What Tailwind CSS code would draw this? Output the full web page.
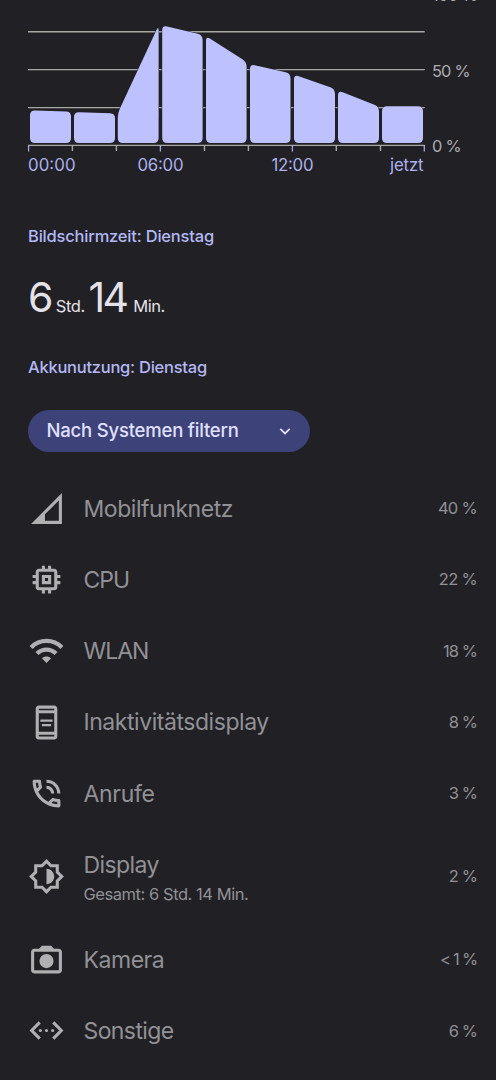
<!DOCTYPE html>
<html lang="de">
<head>
<meta charset="utf-8">
<title>Akkunutzung</title>
<script src="https://cdn.jsdelivr.net/npm/@tailwindcss/browser@4"></script>
</head>
<body class="bg-[#202025] w-[496px] h-[1080px] overflow-hidden font-['Inter','Noto_Sans',sans-serif]">
<main class="flex flex-col">
  <svg class="block w-[496px] h-[190px]" viewBox="0 0 496 190">
    <g stroke="#a9a8a6" stroke-width="1.4">
      <path d="M28 31.7H424.7M28 69.6H424.7M28 107.6H424.7M28 145.4H424.7"/>
      <path d="M72.4 145V151M116.4 145V151M204.5 145V151M248.4 145V151M336.3 145V151M380.5 145V151"/>
    </g>
    <path d="M28.6 145V151.5M160.4 145V151.5M292.4 145V151.5M424.3 145V151.5" stroke="#a5a9e0" stroke-width="1.3"/>
    <g id="bars" fill="#bdc2ff" stroke="#202025" stroke-width="1" paint-order="stroke"></g>
    <g fill="#adb1ec" font-size="16.8">
      <text x="28" y="171.2" textLength="47.5">00:00</text>
      <text x="137.5" y="171.2" textLength="46">06:00</text>
      <text x="271.5" y="171.2" textLength="42">12:00</text>
      <text x="390" y="171.2" textLength="33.5">jetzt</text>
    </g>
    <g fill="#acabb0" font-size="16.4">
      <text x="432" y="0.8" textLength="46">100 %</text>
      <text x="432" y="76.5" textLength="38.5">50 %</text>
      <text x="432" y="152.4" textLength="29.5">0 %</text>
    </g>
  </svg>

  <section class="px-7">
    <h2 class="mt-[34px] h-6 leading-6 text-[16.5px] font-medium tracking-[-0.2px] text-[#b4b8f5]">Bildschirmzeit: Dienstag</h2>
    <p class="mt-[20px] h-[58px] flex items-baseline text-[#e4e2e8] leading-[58px] whitespace-pre"><span class="w-[23.5px] text-[41px] tracking-[-2px]">6</span><span class="w-[37px] text-[16.5px] tracking-[-0.4px]"> Std. </span><span class="w-[40.5px] text-[41px] tracking-[-2.8px]">14</span><span class="text-[16.5px] tracking-[-0.45px]"> Min.</span></p>
    <h2 class="mt-[29px] h-6 leading-6 text-[16.5px] font-medium tracking-[-0.25px] text-[#b4b8f5]">Akkunutzung: Dienstag</h2>
    <button class="mt-[30.5px] flex items-center justify-between w-[281.5px] h-[42px] rounded-full bg-[#3d4279] pl-[18.5px] pr-[18.5px] text-[#e0e0ff]">
      <span class="text-[18.5px] font-medium tracking-[-0.2px] pt-px">Nach Systemen filtern</span>
      <svg class="w-3 h-3" viewBox="0 0 12 12" fill="none" stroke="currentColor" stroke-width="1.8"><path d="M1.3 3.8 6 8.4l4.7-4.6"/></svg>
    </button>
  </section>

  <ul class="mt-[21.3px] pl-7 pr-[19px] text-[#929196] text-[23px] tracking-[-0.45px]">
    <li class="flex items-center h-[71.25px]">
      <svg class="w-[37px] h-[37px] mr-[18.5px] shrink-0" viewBox="0 0 24 24" fill="#b0b0b3"><path fill-rule="evenodd" d="M2 22h20V2L2 22zm18-2h-9v-4.2l9-9z"/></svg>
      <span class="pt-px">Mobilfunknetz</span><span class="ml-auto text-[16.5px] tracking-[-0.7px]">40 %</span>
    </li>
    <li class="flex items-center h-[71.25px]">
      <svg class="w-[37px] h-[37px] mr-[18.5px] shrink-0" viewBox="0 0 24 24" fill="#b0b0b3"><path d="M15 9H9v6h6V9zm-2 4h-2v-2h2v2zm8-2V9h-2V7c0-1.1-.9-2-2-2h-2V3h-2v2h-2V3H9v2H7c-1.1 0-2 .9-2 2v2H3v2h2v2H3v2h2v2c0 1.1.9 2 2 2h2v2h2v-2h2v2h2v-2h2c1.1 0 2-.9 2-2v-2h2v-2h-2v-2h2zm-4 6H7V7h10v10z"/></svg>
      <span class="pt-px tracking-[-1px]">CPU</span><span class="ml-auto text-[16.5px] tracking-[-0.7px]">22 %</span>
    </li>
    <li class="flex items-center h-[71.25px]">
      <svg class="w-[37px] h-[37px] mr-[18.5px] shrink-0" viewBox="0 0 24 24" fill="none" stroke="#b0b0b3" stroke-width="2.7"><path d="M2 10C7.6 4.4 16.4 4.4 22 10"/><path d="M5.8 14c3.5-3.4 8.9-3.4 12.4 0"/><path d="M9 17.1c1.7-1.6 4.3-1.6 6 0L12 20.1z" fill="#b0b0b3" stroke="none"/></svg>
      <span class="pt-px tracking-[-1px]">WLAN</span><span class="ml-auto text-[16.5px] tracking-[-0.95px]">18 %</span>
    </li>
    <li class="flex items-center h-[71.25px]">
      <svg class="w-[37px] h-[37px] mr-[18.5px] shrink-0" viewBox="0 0 24 24" fill="#b0b0b3"><path d="M17 1H7c-1.1 0-2 .9-2 2v18c0 1.1.9 2 2 2h10c1.1 0 2-.9 2-2V3c0-1.1-.9-2-2-2zm0 20H7v-1h10v1zm0-3H7V6h10v12zm0-14H7V3h10v1z"/><path d="M8 10h8v1.5H8zM9 13h6v1.5H9z"/></svg>
      <span class="pt-px">Inaktivitätsdisplay</span><span class="ml-auto text-[16.5px] tracking-[-0.9px]">8 %</span>
    </li>
    <li class="flex items-center h-[71.25px]">
      <svg class="w-[37px] h-[37px] mr-[18.5px] shrink-0" viewBox="0 0 24 24" fill="#b0b0b3"><path d="M15 12h2c0-2.76-2.24-5-5-5v2c1.66 0 3 1.34 3 3zm4 0h2c0-4.97-4.03-9-9-9v2c3.87 0 7 3.13 7 7zm1 3.5c-1.25 0-2.45-.2-3.57-.57-.1-.03-.21-.05-.31-.05-.26 0-.51.1-.71.29l-2.2 2.2c-2.83-1.44-5.15-3.75-6.59-6.58l2.2-2.21c.28-.27.36-.66.25-1.01C8.7 6.45 8.5 5.25 8.5 4c0-.55-.45-1-1-1H4c-.55 0-1 .45-1 1 0 9.39 7.61 17 17 17 .55 0 1-.45 1-1v-3.5c0-.55-.45-1-1-1zM5.03 5h1.5c.07.88.22 1.75.46 2.59L5.79 8.8c-.41-1.21-.67-2.48-.76-3.8zM19 18.97c-1.32-.09-2.6-.35-3.8-.76l1.2-1.2c.85.24 1.71.39 2.59.45v1.51z"/></svg>
      <span class="pt-px tracking-[-0.3px]">Anrufe</span><span class="ml-auto text-[16.5px] tracking-[-0.9px]">3 %</span>
    </li>
    <li class="flex items-center h-[95px]">
      <svg class="w-[37px] h-[37px] mr-[18.5px] shrink-0" viewBox="0 0 24 24" fill="#b0b0b3"><path d="M20 8.69V4h-4.69L12 .69 8.69 4H4v4.69L.69 12 4 15.31V20h4.69L12 23.31 15.31 20H20v-4.69L23.31 12 20 8.69zm-2 5.79V18h-3.52L12 20.48 9.52 18H6v-3.52L3.52 12 6 9.52V6h3.52L12 3.52 14.48 6H18v3.52L20.48 12 18 14.48zM12 7v10c2.76 0 5-2.24 5-5s-2.24-5-5-5z"/></svg>
      <div class="flex flex-col pt-px"><span class="leading-[34px] tracking-[-0.6px]">Display</span><span class="text-[16.5px] leading-[24px]">Gesamt: 6 Std. 14 Min.</span></div><span class="ml-auto text-[16.5px] tracking-[-0.9px]">2 %</span>
    </li>
    <li class="flex items-center h-[71.25px]">
      <svg class="w-[37px] h-[37px] mr-[18.5px] shrink-0" viewBox="0 0 24 24" fill="#b0b0b3"><path d="M20 5h-3.17L15 3H9L7.17 5H4c-1.1 0-2 .9-2 2v12c0 1.1.9 2 2 2h16c1.1 0 2-.9 2-2V7c0-1.1-.9-2-2-2zm0 14H4V7h16z"/><circle cx="12" cy="13" r="4.6"/></svg>
      <span class="pt-px">Kamera</span><span class="ml-auto text-[16.5px] tracking-[-1.2px]">&lt; 1 %</span>
    </li>
    <li class="flex items-center h-[71.25px]">
      <svg class="w-[37px] h-[37px] mr-[18.5px] shrink-0" viewBox="0 0 24 24" fill="#b0b0b3"><path d="M7.6 6.7 2.4 12l5.2 5.3M16.4 6.7l5.2 5.3-5.2 5.3" fill="none" stroke="#b0b0b3" stroke-width="2"/><circle cx="8" cy="12" r="1"/><circle cx="12" cy="12" r="1"/><circle cx="16" cy="12" r="1"/></svg>
      <span class="pt-px tracking-[-0.6px]">Sonstige</span><span class="ml-auto text-[16.5px] tracking-[-0.9px]">6 %</span>
    </li>
  </ul>
</main>
<script>
  // Each bar: left x, right x, top y at the left, top y at the right.
  const bars = [[30,71,110.5,111.5],[74,115,112,113.3],[117.8,158.6,113,25.5],[162.2,202.6,25.3,35],[206,246.6,36,62],[250,290.5,64,73.5],[294,335,74.5,89],[338,379,90.5,106.5],[382,423,106.3,106.3]];
  const toward = (a, b, d) => { const l = Math.hypot(b[0]-a[0], b[1]-a[1]); return [a[0]+(b[0]-a[0])*d/l, a[1]+(b[1]-a[1])*d/l]; };
  for (const [l, r, a, b] of bars) {
    const p = [[l,143],[l,a],[r,b],[r,143]];
    let d = '';
    p.forEach((c, i) => {
      const s = toward(c, p[(i+3)%4], 5), e = toward(c, p[(i+1)%4], 5);
      d += `${i ? 'L' : 'M'}${s}Q${c} ${e}`;
    });
    const path = document.createElementNS('http://www.w3.org/2000/svg', 'path');
    path.setAttribute('d', d + 'Z');
    document.getElementById('bars').append(path);
  }
</script>
</body>
</html>
